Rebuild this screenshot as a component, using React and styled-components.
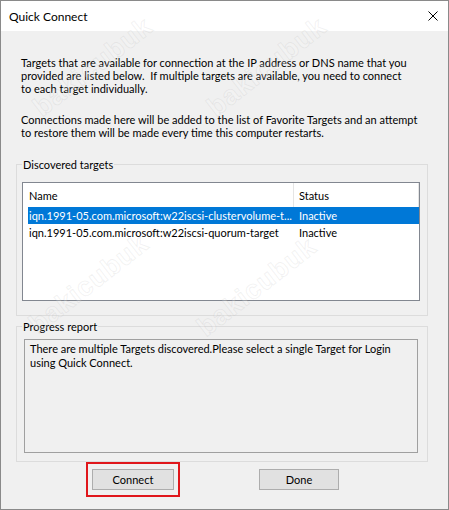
import React from "react";
import styled, { createGlobalStyle } from "styled-components";

const GlobalStyle = createGlobalStyle`
    html, body {
        margin: 0;
        padding: 0;
        background: #ffffff;
    }
    * {
        box-sizing: border-box;
    }
`;

const uiFont = `"Segoe UI", Lato, "Liberation Sans", sans-serif`;

const Window = styled.div`
    position: relative;
    width: 449px;
    height: 510px;
    border: 1px solid #8a8a8a;
    background: #f0f0f0;
    font-family: ${uiFont};
    font-size: 11px;
    color: #000;
    overflow: hidden;
    display: flex;
    flex-direction: column;
`;

const TitleBar = styled.div`
    height: 30px;
    flex: none;
    background: #ffffff;
    display: flex;
    align-items: center;
    justify-content: space-between;
    padding: 0 10px 0 8px;
    font-size: 12px;
`;

const CloseButton = styled.button`
    border: none;
    background: none;
    padding: 0;
    width: 10px;
    height: 10px;
    display: flex;

    svg {
        display: block;
    }
`;

const Content = styled.div`
    display: flex;
    flex-direction: column;
    padding-top: 25px;
`;

const Paragraph = styled.p`
    margin: ${(p) => (p.$first ? "0" : "18px")} 0 0 20px;
    line-height: 13px;
    white-space: nowrap;
`;

const GroupBox = styled.fieldset`
    margin: ${(p) => p.$top}px 0 0 15px;
    width: 412px;
    padding: ${(p) => p.$pad};
    border: 1px solid #dcdcdc;
    min-width: 0;

    legend {
        padding: 0 1px;
        margin: 0;
        line-height: 13px;
    }
`;

const ListView = styled.div`
    width: 398px;
    height: 119px;
    border: 1px solid #828790;
    background: #ffffff;
    padding-left: 5px;
    overflow: hidden;
`;

const Columns = styled.div`
    display: grid;
    grid-template-columns: 266px 125px;
    height: ${(p) => (p.$header ? "24px" : "17px")};
    align-items: center;
    background: ${(p) => (p.$selected ? "#0078d7" : "transparent")};
    color: ${(p) => (p.$selected ? "#ffffff" : "#000000")};
    white-space: nowrap;
`;

const Cell = styled.div`
    height: 100%;
    display: flex;
    align-items: center;
    padding-left: ${(p) => (p.$status ? "5px" : "1px")};
    overflow: hidden;
    border-right: ${(p) => (p.$divider ? "1px solid #e5e5e5" : "none")};
`;

const ReportBox = styled.div`
    margin-left: 2px;
    width: 394px;
    height: 114px;
    border: 1px solid #a0a0a0;
    background: #f0f0f0;
    padding: 2px 5px;
    line-height: 14px;
    white-space: nowrap;
`;

const ButtonRow = styled.div`
    display: flex;
    align-items: flex-start;
    padding-left: 85px;
    gap: 79px;
`;

const Highlight = styled.div`
    border: 2px solid #e0161b;
    padding: 5px 4px;
    display: flex;
`;

const Button = styled.button`
    width: ${(p) => p.$width}px;
    height: 21px;
    margin-top: ${(p) => (p.$offset ? "7px" : "0")};
    border: 1px solid #adadad;
    background: #e1e1e1;
    font-family: ${uiFont};
    font-size: 11px;
    color: #000;
    padding: 0;
`;

const Watermarks = styled.div`
    position: absolute;
    inset: 0;
    pointer-events: none;
`;

const Mark = styled.span`
    position: absolute;
    font-family: "Liberation Sans", sans-serif;
    font-weight: bold;
    font-size: 27px;
    letter-spacing: 1px;
    color: rgba(255, 255, 255, 0.2);
    -webkit-text-stroke: 1px rgba(150, 150, 150, 0.13);
    transform: translate(-50%, -50%) rotate(-38deg);
    white-space: nowrap;
`;

// watermark centres, page pixels
const marks = [
    [92, 66],
    [266, 66],
    [88, 283],
    [256, 286],
];

const targets = [
    {
        name: "iqn.1991-05.com.microsoft:w22iscsi-clustervolume-t...",
        status: "Inactive",
        selected: true,
    },
    {
        name: "iqn.1991-05.com.microsoft:w22iscsi-quorum-target",
        status: "Inactive",
        selected: false,
    },
];

function App() {
    return (
        <React.Fragment>
            <GlobalStyle />
            <Window>
                <TitleBar>
                    <span>Quick Connect</span>
                    <CloseButton aria-label="Close">
                        <svg width="10" height="10" viewBox="0 0 10 10">
                            <path
                                d="M0.5 0.5 L9.5 9.5 M9.5 0.5 L0.5 9.5"
                                stroke="#000"
                                strokeWidth="1"
                                fill="none"
                            />
                        </svg>
                    </CloseButton>
                </TitleBar>
                <Content>
                    <Paragraph $first>
                        Targets that are available for connection at the IP address or DNS name that you
                        <br />
                        provided are listed below.{"\u00a0"} If multiple targets are available, you need to connect
                        <br />
                        to each target individually.
                    </Paragraph>
                    <Paragraph>
                        Connections made here will be added to the list of Favorite Targets and an attempt
                        <br />
                        to restore them will be made every time this computer restarts.
                    </Paragraph>

                    <GroupBox $top={19} $pad="11px 7px 14px 5px">
                        <legend>Discovered targets</legend>
                        <ListView>
                            <Columns $header>
                                <Cell $divider>Name</Cell>
                                <Cell $status $divider>Status</Cell>
                            </Columns>
                            {targets.map((t) => (
                                <Columns key={t.name} $selected={t.selected}>
                                    <Cell>{t.name}</Cell>
                                    <Cell $status>{t.status}</Cell>
                                </Columns>
                            ))}
                        </ListView>
                    </GroupBox>

                    <GroupBox $top={4} $pad="6px 7px 8px 5px">
                        <legend>Progress report</legend>
                        <ReportBox>
                            There are multiple Targets discovered.Please select a single Target for Login
                            <br />
                            using Quick Connect.
                        </ReportBox>
                    </GroupBox>

                    <ButtonRow>
                        <Highlight>
                            <Button $width={82}>Connect</Button>
                        </Highlight>
                        <Button $width={80} $offset>
                            Done
                        </Button>
                    </ButtonRow>
                </Content>
                <Watermarks>
                    {marks.map(([x, y], i) => (
                        <Mark key={i} style={{ left: x, top: y }}>
                            bakicubuk
                        </Mark>
                    ))}
                </Watermarks>
            </Window>
        </React.Fragment>
    );
}

export default App;
